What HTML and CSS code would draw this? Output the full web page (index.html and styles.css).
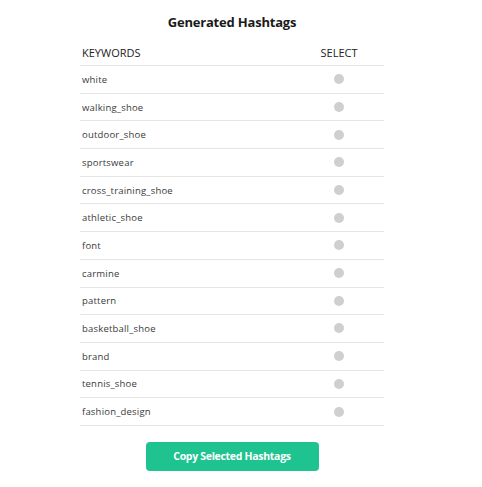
FILE: index.html
```html
<!DOCTYPE html>
<html>
<head>
<meta charset="utf-8">
<link rel="stylesheet" href="styles.css">
</head>
<body>
<div class="panel">
  <h2 class="title">Generated Hashtags</h2>
  <table class="tags">
    <thead>
      <tr><th class="kw">KEYWORDS</th><th class="sel">SELECT</th></tr>
    </thead>
    <tbody>
      <tr><td class="kw">white</td><td class="sel"><span class="dot"></span></td></tr>
      <tr><td class="kw">walking_shoe</td><td class="sel"><span class="dot"></span></td></tr>
      <tr><td class="kw">outdoor_shoe</td><td class="sel"><span class="dot"></span></td></tr>
      <tr><td class="kw">sportswear</td><td class="sel"><span class="dot"></span></td></tr>
      <tr><td class="kw">cross_training_shoe</td><td class="sel"><span class="dot"></span></td></tr>
      <tr><td class="kw">athletic_shoe</td><td class="sel"><span class="dot"></span></td></tr>
      <tr><td class="kw">font</td><td class="sel"><span class="dot"></span></td></tr>
      <tr><td class="kw">carmine</td><td class="sel"><span class="dot"></span></td></tr>
      <tr><td class="kw">pattern</td><td class="sel"><span class="dot"></span></td></tr>
      <tr><td class="kw">basketball_shoe</td><td class="sel"><span class="dot"></span></td></tr>
      <tr><td class="kw">brand</td><td class="sel"><span class="dot"></span></td></tr>
      <tr><td class="kw">tennis_shoe</td><td class="sel"><span class="dot"></span></td></tr>
      <tr><td class="kw">fashion_design</td><td class="sel"><span class="dot"></span></td></tr>
    </tbody>
  </table>
  <div class="actions">
    <button class="copy">Copy Selected Hashtags</button>
  </div>
</div>
</body>
</html>
```
FILE: styles.css
```css
html, body {
  margin: 0;
  padding: 0;
  background: #fff;
}
body {
  font-family: "Open Sans", "DejaVu Sans", sans-serif;
  color: #222;
}
.panel {
  width: 304px;
  margin-left: 80px;
  padding-top: 13px;
}
.title {
  margin: 0;
  text-align: center;
  font-size: 13px;
  font-weight: 700;
  line-height: 18px;
  color: #1a1a1a;
  letter-spacing: -0.2px;
}
.tags {
  width: 100%;
  border-collapse: collapse;
  margin-top: 11px;
}
.tags th {
  font-weight: 400;
  font-size: 11px;
  color: #222;
  height: 20px;
  padding: 0 0 3px 2px;
  border-bottom: 1px solid #e6e6e6;
  vertical-align: middle;
}
.tags th.kw { text-align: left; }
.tags th.sel { text-align: center; width: 90px; padding: 0 0 3px 0; }
.tags td {
  height: 26.7px;
  padding: 0 0 0 2px;
  font-size: 9.5px;
  color: #3a3a3a;
  border-bottom: 1px solid #e6e6e6;
  vertical-align: middle;
  letter-spacing: 0.2px;
}
.tags td.sel {
  text-align: center;
  padding: 0;
}
.dot {
  display: inline-block;
  width: 10px;
  height: 10px;
  border-radius: 50%;
  background: #cfcfcf;
  vertical-align: middle;
  position: relative;
  top: -1px;
}
.actions {
  display: flex;
  justify-content: center;
  margin-top: 16px;
}
.copy {
  width: 173px;
  height: 29px;
  border: none;
  border-radius: 4px;
  background: #1ec38f;
  color: #fff;
  font-family: "Open Sans", "DejaVu Sans", sans-serif;
  font-weight: 700;
  font-size: 10.5px;
  letter-spacing: -0.3px;
  padding: 0;
}
```
